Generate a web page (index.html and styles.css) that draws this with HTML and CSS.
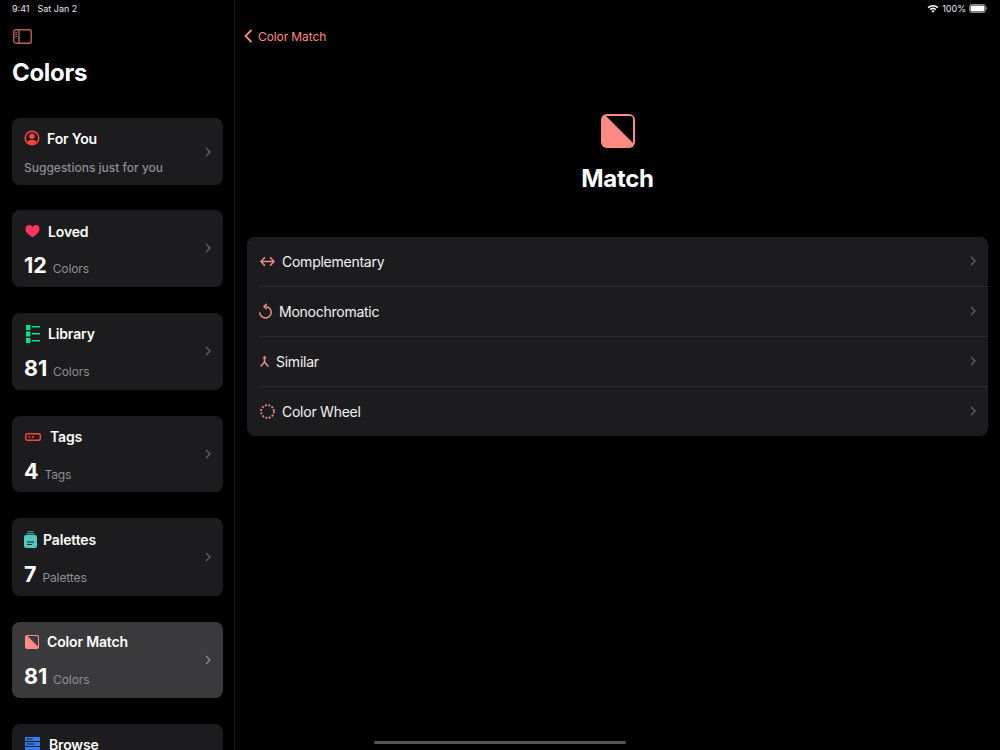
FILE: index.html
```html
<!DOCTYPE html>
<html>
 <head>
  <title>Colors - Match</title>
  <meta charset="UTF-8">
  <link rel="stylesheet" href="styles.css">
 </head>
 <body>
	<div class="statusbar">
		<span class="clock">9:41</span>
		<span class="date">Sat Jan 2</span>
		<span class="status_right">
			<svg class="wifi" width="12" height="9" viewBox="0 0 12 9"><path d="M.6 3A8 8 0 0 1 11.4 3L10.3 4.2A6.4 6.4 0 0 0 1.700 4.200ZM2.600 5A5 5 0 0 1 9.400 5L8.300 6.200A3.400 3.400 0 0 0 3.700 6.200ZM4.500 7A2.200 2.200 0 0 1 7.500 7L6 8.700Z" fill="#fff"/></svg>
			<span>100%</span>
			<svg class="battery" width="19" height="9" viewBox="0 0 19 9"><rect x=".5" y=".5" width="16" height="8" rx="2" fill="none" stroke="#8a8a8a"/><rect x="1.500" y="1.500" width="14" height="6" rx="1" fill="#fff"/><path d="M17.500 3v3c.7-.2 1-.8 1-1.500s-.3-1.300-1-1.500Z" fill="#8a8a8a"/></svg>
		</span>
	</div>

	<div class="app">
		<div class="sidebar">
			<div class="toolbar">
				<svg width="19" height="15" viewBox="0 0 19 15" fill="none" stroke="#b9625f" stroke-width="1.400"><rect x=".8" y=".8" width="17.400" height="13.400" rx="2"/><path d="M6 .8v13.400"/><path d="M2.300 3.500h1.800M2.300 5.500h1.800M2.300 7.500h1.800" stroke-width="1"/></svg>
			</div>
			<h1 class="sidebar_title">Colors</h1>

			<div class="cards">
				<div class="card card_short">
					<div class="card_body">
						<div class="card_title">
							<svg class="icon_foryou" width="16" height="16" viewBox="0 0 16 16"><circle cx="8" cy="8" r="6.800" fill="none" stroke="#ff453a" stroke-width="1.500"/><circle cx="8" cy="6.200" r="2.700" fill="#ff453a"/><path d="M3.300 12.300C4.300 10.500 6 9.800 8 9.800s3.700.7 4.700 2.500A6.500 6.500 0 0 1 3.300 12.300Z" fill="#ff453a"/></svg>
							<span>For You</span>
						</div>
						<div class="card_note">Suggestions just for you</div>
					</div>
					<svg class="chevron" width="6" height="10" viewBox="0 0 6 10"><path d="M1 1l4 4-4 4" fill="none" stroke="#636366" stroke-width="1.300"/></svg>
				</div>

				<div class="card">
					<div class="card_body">
						<div class="card_title">
							<svg class="icon_loved" width="15" height="14" viewBox="0 0 16 14"><path d="M8 13.600C3.500 10.600.5 8 .5 4.500.5 2.200 2.200.6 4.300.6 5.900.6 7.200 1.400 8 2.800 8.800 1.400 10.100.6 11.700.6c2.100 0 3.800 1.600 3.800 3.900C15.500 8 12.500 10.600 8 13.600Z" fill="#ff375f"/></svg>
							<span>Loved</span>
						</div>
						<div class="card_count"><b>12</b><span>Colors</span></div>
					</div>
					<svg class="chevron" width="6" height="10" viewBox="0 0 6 10"><path d="M1 1l4 4-4 4" fill="none" stroke="#636366" stroke-width="1.300"/></svg>
				</div>

				<div class="card">
					<div class="card_body">
						<div class="card_title">
							<svg class="icon_library" width="14" height="18" viewBox="0 0 14 18" fill="#00e38a"><rect x="0" y="0" width="4.500" height="5"/><rect x="0" y="6.500" width="4.500" height="5"/><rect x="0" y="13" width="4.500" height="5"/><rect x="6" y="1" width="8" height="1.500"/><rect x="6" y="8" width="8" height="1.500"/><rect x="6" y="15" width="8" height="1.500"/></svg>
							<span>Library</span>
						</div>
						<div class="card_count"><b>81</b><span>Colors</span></div>
					</div>
					<svg class="chevron" width="6" height="10" viewBox="0 0 6 10"><path d="M1 1l4 4-4 4" fill="none" stroke="#636366" stroke-width="1.300"/></svg>
				</div>

				<div class="card">
					<div class="card_body">
						<div class="card_title">
							<svg class="icon_tags" width="16" height="8" viewBox="0 0 16 8"><rect x=".7" y=".7" width="14.600" height="6.600" rx="1.500" fill="none" stroke="#ff453a" stroke-width="1.400"/><path d="M3.500 4h2M7 4h2" stroke="#ff453a" stroke-width="1.300"/></svg>
							<span>Tags</span>
						</div>
						<div class="card_count"><b>4</b><span>Tags</span></div>
					</div>
					<svg class="chevron" width="6" height="10" viewBox="0 0 6 10"><path d="M1 1l4 4-4 4" fill="none" stroke="#636366" stroke-width="1.300"/></svg>
				</div>

				<div class="card card_palettes">
					<div class="card_body">
						<div class="card_title">
							<svg class="icon_palettes" width="13" height="17" viewBox="0 0 13 17"><path d="M3.500 0h6v1.200h-6ZM2.500 2h8v1.500h-8Z" fill="#3d8f88"/><path d="M2 4h9a2 2 0 0 1 2 2v9a2 2 0 0 1-2 2H2a2 2 0 0 1-2-2V6a2 2 0 0 1 2-2Z" fill="#4fc8bd"/><path d="M3 11h7M3 13.500h5" stroke="#1c1c1e" stroke-width="1"/></svg>
							<span>Palettes</span>
						</div>
						<div class="card_count"><b>7</b><span>Palettes</span></div>
					</div>
					<svg class="chevron" width="6" height="10" viewBox="0 0 6 10"><path d="M1 1l4 4-4 4" fill="none" stroke="#636366" stroke-width="1.300"/></svg>
				</div>

				<div class="card card_active">
					<div class="card_body">
						<div class="card_title">
							<svg class="icon_match" width="14" height="14" viewBox="0 0 14 14"><rect width="14" height="14" rx="2" fill="#ff8a85"/><path d="M2.500 1h9a1.500 1.500 0 0 1 1.500 1.500v9Z" fill="#3a3a3c"/></svg>
							<span>Color Match</span>
						</div>
						<div class="card_count"><b>81</b><span>Colors</span></div>
					</div>
					<svg class="chevron" width="6" height="10" viewBox="0 0 6 10"><path d="M1 1l4 4-4 4" fill="none" stroke="#8e8e93" stroke-width="1.300"/></svg>
				</div>

				<div class="card">
					<div class="card_body">
						<div class="card_title">
							<svg class="icon_browse" width="15" height="15" viewBox="0 0 15 15"><path d="M0 0h15v4H0ZM0 5h15v4H0ZM0 10h15v4H0Z" fill="#2f7df0"/><path d="M1.500 2h6M1.500 7h8" stroke="#1c1c1e"/></svg>
							<span>Browse</span>
						</div>
					</div>
				</div>
			</div>
		</div>

		<div class="detail">
			<div class="backbar">
				<svg width="9" height="14" viewBox="0 0 9 14"><path d="M7.500 1L1.500 7l6 6" fill="none" stroke="#ff8a85" stroke-width="1.800"/></svg>
				<span>Color Match</span>
			</div>
			<div class="hero">
				<svg width="34" height="34" viewBox="0 0 34 34"><rect width="34" height="34" rx="6" fill="#ff8a85"/><path d="M5 2h24a3 3 0 0 1 3 3v24Z" fill="#000"/></svg>
				<h2 class="hero_title">Match</h2>
			</div>
			<div class="list">
				<div class="row">
					<svg class="row_icon" width="15" height="11" viewBox="0 0 15 11" fill="none" stroke="#f08a84" stroke-width="1.500"><path d="M1 5.500h13M5 1.200L1 5.500l4 4.300M10 1.200l4 4.300-4 4.300"/></svg>
					<span class="row_label">Complementary</span>
					<svg class="chevron" width="6" height="10" viewBox="0 0 6 10"><path d="M1 1l4 4-4 4" fill="none" stroke="#636366" stroke-width="1.300"/></svg>
				</div>
				<div class="row">
					<svg class="row_icon icon_mono" width="13" height="16" viewBox="0 0 13 16" fill="none" stroke="#f08a84" stroke-width="1.500"><path d="M6.500 3.500a5.700 5.700 0 1 1-5.700 5.700"/><path d="M7.800 .7L5 3.500l2.800 2.600"/></svg>
					<span class="row_label">Monochromatic</span>
					<svg class="chevron" width="6" height="10" viewBox="0 0 6 10"><path d="M1 1l4 4-4 4" fill="none" stroke="#636366" stroke-width="1.300"/></svg>
				</div>
				<div class="row">
					<svg class="row_icon" width="9" height="12" viewBox="0 0 9 12" fill="none" stroke="#f08a84" stroke-width="1.500"><path d="M4.500 2v5M4.500 7L.7 11.500M4.500 7l3.800 4.500"/><path d="M2.500 3.500l2-3 2 3Z" fill="#f08a84" stroke="none"/></svg>
					<span class="row_label">Similar</span>
					<svg class="chevron" width="6" height="10" viewBox="0 0 6 10"><path d="M1 1l4 4-4 4" fill="none" stroke="#636366" stroke-width="1.300"/></svg>
				</div>
				<div class="row">
					<svg class="row_icon" width="15" height="15" viewBox="0 0 15 15"><circle cx="7.500" cy="7.500" r="6.400" fill="none" stroke="#f08a84" stroke-width="1.800" stroke-dasharray="1.900 1.450"/></svg>
					<span class="row_label">Color Wheel</span>
					<svg class="chevron" width="6" height="10" viewBox="0 0 6 10"><path d="M1 1l4 4-4 4" fill="none" stroke="#636366" stroke-width="1.300"/></svg>
				</div>
			</div>
		</div>
	</div>

	<div class="homebar"></div>
 </body>
</html>
```

FILE: styles.css
```css
html,body{
	margin: 0;
	height: 100%;
	background: #000;
	color: #fff;
	font-family: Inter, "Liberation Sans", sans-serif;
	overflow: hidden;
}
svg{
	display: block;
	flex: none;
}
h1,h2{
	margin: 0;
}
.statusbar{
	position: absolute;
	top: 3px;
	left: 12px;
	right: 12px;
	display: flex;
	height: 11px;
	align-items: center;
	font-size: 9px;
	line-height: 11px;
	color: #e8e8e8;
}
.date{
	margin-left: 8px;
}
.status_right{
	margin-left: auto;
	display: flex;
	align-items: center;
	gap: 3px;
}
.app{
	display: flex;
	height: 750px;
}
.sidebar{
	width: 222px;
	flex: none;
	padding-left: 12px;
	border-right: solid 1px #1c1c1e;
	overflow: hidden;
}
.toolbar{
	padding: 29px 0 0 1px;
	height: 21px;
}
.sidebar_title{
	margin-top: 8px;
	font-size: 24px;
	letter-spacing: -.3px;
	line-height: 30px;
	font-weight: 700;
}
.cards{
	margin-top: 30px;
	width: 211px;
	display: flex;
	flex-direction: column;
	gap: 26px;
}
.card{
	display: flex;
	align-items: center;
	height: 76.800px;
	flex: none;
	padding: 0 12px;
	box-sizing: border-box;
	background: #1c1c1e;
	border-radius: 8px;
}
.card_short{
	height: 67px;
	margin-bottom: -1px;
}
.card_short .card_body{
	padding-top: 9px;
}
.card_palettes{
	height: 77.600px;
}
.card_palettes .card_count{
	margin-top: 10px;
}
.card_active{
	height: 76px;
	background: #3a3a3c;
}
.card_active .card_body{
	padding-top: 9px;
}
.card_body{
	flex: 1;
	align-self: flex-start;
	padding-top: 10px;
}
.card_title{
	display: flex;
	align-items: center;
	height: 22px;
	font-size: 14px;
	letter-spacing: -.15px;
	font-weight: 600;
}
.card_note{
	margin-top: 10px;
	font-size: 12px;
	line-height: 18px;
	font-weight: 500;
	color: #8e8e93;
}
.card_count{
	display: flex;
	align-items: baseline;
	margin-top: 9px;
	line-height: 28px;
	font-size: 12px;
	letter-spacing: -.1px;
	color: #8e8e93;
}
.card_count b{
	font-size: 21.500px;
	font-weight: 700;
	color: #fff;
	margin-right: 6px;
}
.icon_foryou{ margin-right: 7px; }
.icon_loved{ margin-left: 1px; margin-right: 8px; }
.icon_library{ margin-left: 2px; margin-right: 8px; }
.icon_tags{ margin-left: 1px; margin-right: 9px; }
.icon_palettes{ margin-right: 6px; }
.icon_match{ margin-left: 1px; margin-right: 8px; }
.icon_browse{ margin-left: 1px; margin-right: 9px; }
.detail{
	flex: 1;
	min-width: 0;
}
.backbar{
	display: flex;
	align-items: center;
	gap: 5px;
	height: 22px;
	margin-top: 25px;
	padding-left: 9px;
	font-size: 12px;
	letter-spacing: -.1px;
	color: #ff8a85;
}
.hero{
	display: flex;
	flex-direction: column;
	align-items: center;
	margin-top: 67px;
}
.hero_title{
	margin-top: 16px;
	font-size: 24px;
	letter-spacing: -.3px;
	line-height: 30px;
	font-weight: 700;
}
.list{
	margin: 43px 12px 0;
	background: #1c1c1e;
	border-radius: 8px;
}
.row{
	display: flex;
	align-items: center;
	height: 50px;
	margin-left: 12px;
	padding-right: 12px;
	padding-bottom: 1px;
	border-bottom: solid 1px #2c2c2e;
	box-sizing: border-box;
	font-size: 14px;
	letter-spacing: -.25px;
	color: #f2f2f7;
}
.row:last-child{
	border-bottom: none;
	height: 49px;
}
.row_icon{
	margin-left: 1px;
	margin-right: 7px;
}
.row_icon.icon_mono{
	margin-left: 0;
}
.row_label{
	flex: 1;
}
.homebar{
	position: absolute;
	left: 374px;
	top: 741px;
	width: 252px;
	height: 3px;
	border-radius: 2px;
	background: #555;
}
```
